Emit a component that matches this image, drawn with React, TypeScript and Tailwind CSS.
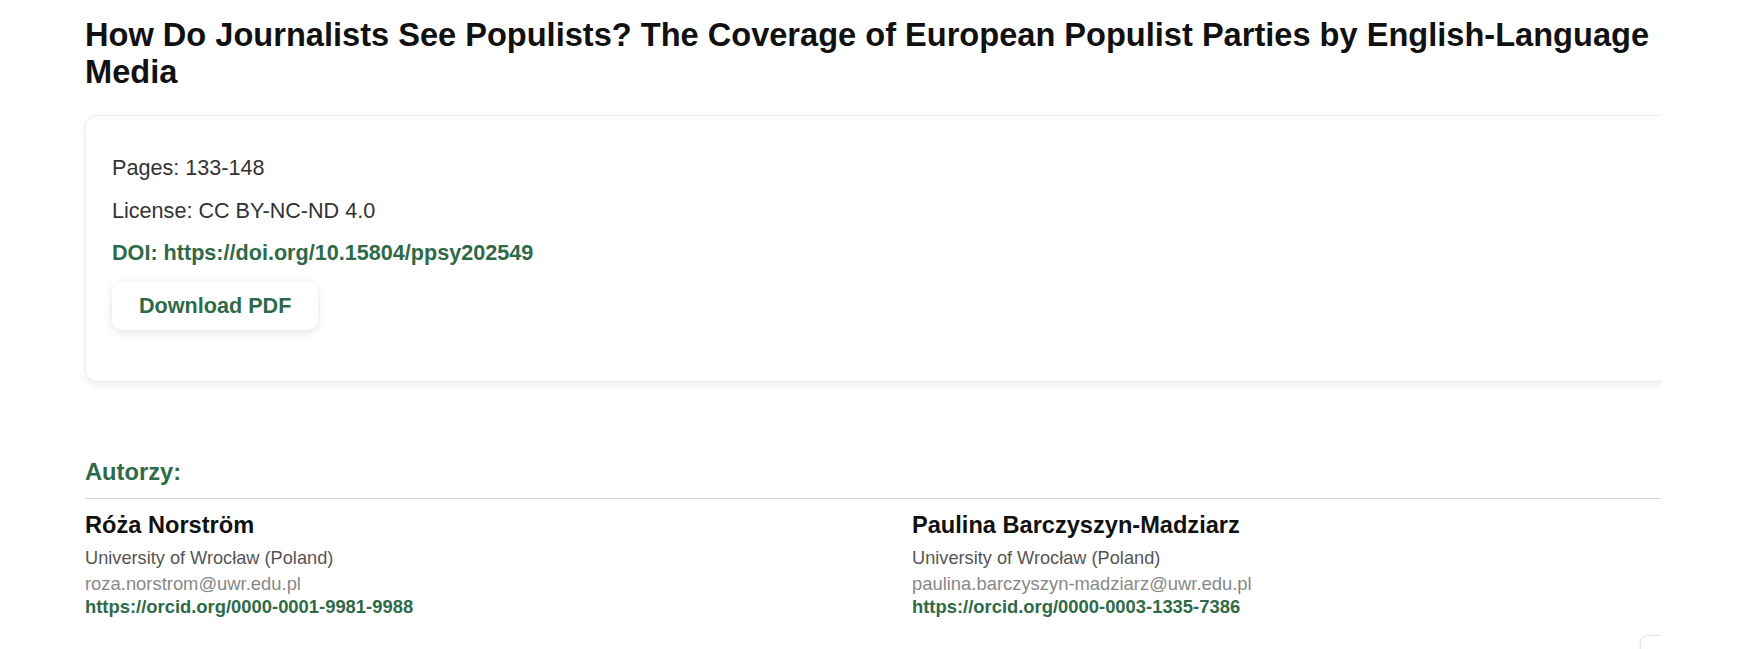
import React from "react";

const authors = [
  {
    name: "Róża Norström",
    affiliation: "University of Wrocław (Poland)",
    email: "roza.norstrom@uwr.edu.pl",
    orcid: "https://orcid.org/0000-0001-9981-9988",
  },
  {
    name: "Paulina Barczyszyn-Madziarz",
    affiliation: "University of Wrocław (Poland)",
    email: "paulina.barczyszyn-madziarz@uwr.edu.pl",
    orcid: "https://orcid.org/0000-0003-1335-7386",
  },
];

const App: React.FC = () => {
  return (
    <div className="relative h-[649px] w-full bg-white font-['Liberation_Sans',Arial,sans-serif]">
      <div className="relative h-[649px] w-[1661px] overflow-hidden">
        <div className="w-[1614px] ml-[85px] pt-[17px]">
          {/* title */}
          <h1 className="text-[32.6px] leading-[36.7px] font-bold text-[#111]">
            How Do Journalists See Populists? The Coverage of European Populist Parties by English-Language Media
          </h1>

          {/* article info card */}
          <div className="mt-[25px] bg-white border border-[#ececec] rounded-[12px] shadow-[0_3px_8px_rgba(0,0,0,0.07)] pl-[26px] pt-[36px] pb-[51px]">
            <p className="text-[21.6px] leading-[32px] text-[#333]">Pages: 133-148</p>
            <p className="mt-[10.5px] text-[21.6px] leading-[32px] text-[#333]">License: CC BY-NC-ND 4.0</p>
            <p className="mt-[10.5px] text-[21.6px] leading-[32px] font-bold text-[#2f6a48]">
              DOI: https://doi.org/10.15804/ppsy202549
            </p>
            <button className="mt-[12.5px] bg-white rounded-[10px] shadow-[0_2px_8px_rgba(0,0,0,0.12)] px-[27px] py-[8px] text-[21.6px] leading-[32px] font-bold text-[#2f6a48]">
              Download PDF
            </button>
          </div>

          {/* authors */}
          <div className="mt-[76px]">
            <h3 className="text-[23.7px] leading-[28px] font-bold text-[#2f6a48] pb-[12px] border-b border-[#d9d9d9]">
              Autorzy:
            </h3>
            <div className="grid grid-cols-2 gap-x-[40px] mt-[12px]">
              {authors.map((a) => (
                <div key={a.email}>
                  <h4 className="text-[23.6px] leading-[28px] font-bold text-[#111]">{a.name}</h4>
                  <p className="mt-[7px] text-[18.2px] leading-[25px] text-[#555]">{a.affiliation}</p>
                  <p className="text-[18.4px] leading-[25px] text-[#888]">{a.email}</p>
                  <p className="mt-[-2px] text-[18.4px] leading-[25px] font-bold text-[#2f6a48]">{a.orcid}</p>
                </div>
              ))}
            </div>
          </div>
        </div>

        {/* back to top button, mostly below the fold */}
        <div className="absolute left-[1640px] top-[635px] w-[44px] h-[44px] rounded-[8px] border border-[#e5e5e5] bg-white shadow-[0_1px_4px_rgba(0,0,0,0.08)]" />
      </div>
    </div>
  );
};

export default App;
